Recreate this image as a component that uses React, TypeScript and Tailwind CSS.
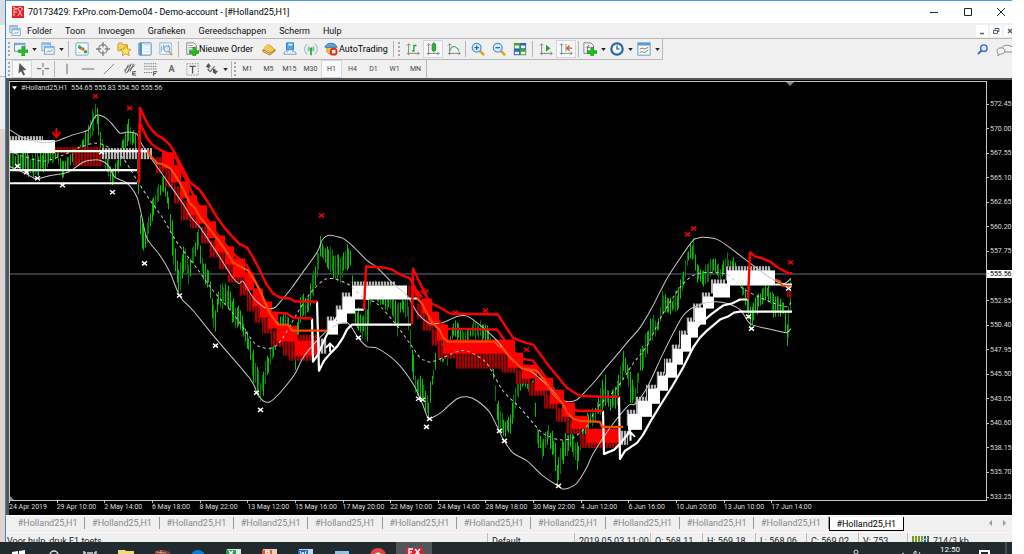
import React from "react";

type Block = [number, number, number, number];
type Point = [number, number];

const menuItems = ["Folder", "Toon", "Invoegen", "Grafieken", "Gereedschappen", "Scherm", "Hulp"];
const timeframes = ["M1", "M5", "M15", "M30", "H1", "H4", "D1", "W1", "MN"];

const prices = [
  "572.45", "570.00", "567.55", "565.10", "562.65", "560.20", "557.75", "555.56", "552.85",
  "550.40", "547.95", "545.50", "543.05", "540.60", "538.15", "535.70", "533.25",
];

const dates = [
  "24 Apr 2019", "29 Apr 10:00", "2 May 14:00", "6 May 18:00", "8 May 22:00", "13 May 12:00",
  "15 May 16:00", "17 May 20:00", "22 May 10:00", "24 May 14:00", "28 May 18:00", "30 May 22:00",
  "4 Jun 12:00", "6 Jun 16:00", "10 Jun 20:00", "13 Jun 10:00", "17 Jun 14:00",
];

/* ---------- chart data ---------- */

// x, high, low
const candles: [number, number, number][] = [
  [10, 150, 172], [20, 150, 168], [30, 153, 178], [45, 150, 170], [56, 142, 158], [62, 158, 178],
  [68, 155, 170], [75, 148, 158], [82, 140, 150], [89, 122, 145], [92, 108, 138], [96, 102, 114],
  [99, 122, 148], [103, 140, 162], [112, 168, 186], [118, 155, 172], [122, 140, 160], [128, 118, 142],
  [136, 135, 152], [140, 212, 235], [144, 232, 258], [150, 205, 230], [158, 185, 202], [163, 172, 192],
  [168, 192, 212], [173, 228, 268], [179, 268, 298], [184, 240, 270], [188, 258, 285], [193, 240, 262],
  [198, 230, 246], [201, 250, 270], [204, 263, 290], [209, 268, 285], [214, 310, 345], [218, 285, 308],
  [227, 284, 310], [235, 300, 327], [243, 318, 336], [249, 335, 355], [254, 350, 390], [260, 375, 405],
  [267, 355, 378], [273, 338, 357], [280, 312, 328], [288, 314, 330], [295, 345, 372], [300, 293, 323],
  [307, 295, 312], [312, 273, 300], [317, 252, 275], [320, 234, 257], [330, 247, 275], [336, 255, 278],
  [340, 248, 282], [350, 245, 268], [354, 305, 322], [360, 310, 337], [367, 297, 345], [370, 290, 304],
  [375, 280, 297], [383, 294, 307], [390, 297, 310], [397, 300, 335], [401, 297, 310], [407, 297, 317],
  [411, 335, 363], [415, 373, 397], [422, 373, 398], [428, 395, 420], [432, 370, 387], [437, 336, 357],
  [447, 343, 363], [453, 317, 340], [463, 330, 342], [473, 320, 337], [483, 320, 340], [490, 332, 350],
  [493, 367, 380], [497, 397, 423], [503, 417, 438], [510, 410, 433], [517, 373, 403], [523, 368, 388],
  [533, 376, 392], [537, 425, 443], [542, 438, 457], [548, 422, 440], [554, 435, 460], [557, 460, 485],
  [562, 440, 463], [570, 423, 450], [577, 443, 468], [582, 427, 443], [588, 410, 427], [594, 408, 425],
  [600, 383, 413], [605, 375, 407], [610, 395, 412], [617, 380, 407], [620, 363, 387], [624, 347, 367],
  [630, 373, 400], [635, 387, 405], [640, 350, 377], [647, 327, 353], [651, 307, 340], [657, 320, 333],
  [662, 290, 313], [670, 298, 313], [678, 288, 310], [683, 265, 287], [688, 247, 263], [693, 238, 257],
  [697, 265, 280], [703, 268, 290], [708, 262, 280], [713, 256, 273], [720, 266, 278], [727, 253, 270],
  [735, 260, 272], [743, 283, 297], [750, 303, 327], [755, 293, 317], [760, 290, 304], [767, 283, 297],
  [773, 293, 317], [783, 300, 314], [787, 313, 350], [791, 270, 307],
];

const upperBand =
  "9,129 22,137 40,142 56,141 72,135 88,130 92,122 97,115 106,118 113,125 120,133 127,132 137,134 140,141 147,152 163,175 182,202 192,218 200,227 210,242 220,257 232,276 239,283 243,281 253,297 263,306 268,308 275,307 283,298 292,287 302,273 317,252 322,240 326,236 330,235 336,236 343,238 352,245 367,260 377,267 393,283 407,295 417,312 424,319 430,323 443,322 450,319 457,316 464,315 470,317 483,327 497,340 513,360 523,368 533,372 553,390 561,398 567,401 577,399 587,389 597,378 605,368 618,353 627,342 640,327 652,307 667,278 682,255 693,240 697,238 703,237 717,239 728,246 740,255 757,268 773,279 779,282 785,283 791,278";
const lowerBand =
  "9,166 25,173 34,178 40,178 52,175 68,172 83,162 91,160 100,160 108,165 115,177 127,183 137,197 142,217 147,238 160,255 170,272 180,296 193,310 215,337 250,378 257,392 263,400 270,401 280,392 295,373 303,357 317,340 330,328 347,322 358,337 367,346 378,348 397,362 413,383 422,402 428,417 434,416 443,410 457,398 467,396 477,400 490,412 503,438 513,452 527,460 543,475 558,485 563,488 569,487 577,482 587,466 593,453 610,427 628,405 635,403 647,387 663,353 680,320 686,312 693,307 707,302 723,302 740,309 750,323 767,328 780,331 787,332 791,328";
const middleBand =
  "9,151 23,156 43,161 63,155 80,147 97,143 110,148 123,158 137,180 150,200 163,218 177,242 197,268 213,290 233,313 250,337 256,344 262,347 273,347 283,337 297,313 310,293 323,280 330,278 337,279 350,285 363,297 377,303 393,320 410,343 420,357 426,360 433,361 457,351 465,350 473,353 487,363 503,390 520,407 540,430 550,436 560,439 573,437 587,425 597,407 617,387 633,363 647,345 663,313 680,287 693,275 707,272 727,274 743,288 760,297 780,305 787,306 791,302";

const redLines = [
  "139,183 140,108 147,123 152,130 157,135 164,139 170,145 175,153 180,163 190,182 200,190 208,202 217,217 225,228 233,237 240,244 247,247 253,257 260,270 266,283 273,293 280,297 290,298 295,301 317,301",
  "139,140 140,123 147,138 152,144 157,148 165,152 176,158 190,188 200,208 220,238 237,257 247,265 260,290 268,309 272,312 287,313 293,317 312,318",
  "364,309 366,266 383,267 392,269 400,274 410,278 415,288 422,297",
  "412,324 413,268 422,287 430,302 440,307 450,313 498,314 505,325 513,337 522,341 533,344 540,353 547,363 557,375 567,387 573,391 580,395 600,396 619,396",
  "414,288 420,300 428,308 440,322 448,328 497,329 505,340 515,352 522,358 533,360 543,373 555,390 565,402 573,408 578,410 603,410",
  "748,299 750,252 755,256 762,258 770,261 778,267 787,272 792,273",
];

const orangeLines = [
  "148,150 150,156 153,158 157,163 163,164 170,168 175,175 180,183 185,193 190,203 195,208 200,217 210,229 220,242 227,252 233,262 240,266 248,270 254,279 260,290 265,302 270,313 278,324 288,324 292,330 327,330",
  "417,298 422,303 427,313 433,323 440,330 443,337 448,341 495,341 498,345 503,348 510,357 516,362 522,368 537,370 545,380 553,393 562,402 568,413 573,418 580,420 600,421 602,426 623,426",
  "775,279 780,281 782,285 792,286",
];

const whiteLines = [
  "9,170 137,170",
  "9,183 137,183",
  "55,151 148,151",
  "312,318 313,361 318,354 324,340 330,328 336,318 345,309 364,309",
  "317,301 319,370 324,360 331,352 337,346 343,337 347,329 352,324 411,324",
  "603,410 604,453 614,449 620,443 627,434 636,420 648,402 664,378 680,352 690,336 700,323 712,313 723,305 732,303 740,299 748,299",
  "619,396 620,458 625,450 631,446 637,442 643,434 652,418 660,405 672,386 683,367 693,347 700,337 707,330 720,319 728,316 734,312 740,311 792,311",
  "352,298 417,298",
  "727,284 792,284",
];

const redBlocks: Block[] = [
  [162, 152, 12, 16], [171, 165, 10, 17], [180, 181, 9, 17], [187, 195, 10, 20], [196, 205, 11, 18],
  [207, 221, 9, 17], [215, 235, 10, 17], [225, 246, 9, 18], [233, 258, 12, 19], [245, 272, 9, 18],
  [253, 288, 10, 18], [260, 301, 12, 16], [268, 313, 10, 15], [277, 325, 20, 16], [295, 340, 23, 15],
  [422, 298, 10, 15], [428, 311, 11, 14], [437, 324, 11, 16], [443, 339, 72, 14], [508, 352, 15, 15],
  [522, 364, 15, 14], [535, 377, 18, 13], [550, 389, 14, 14], [562, 402, 13, 14], [572, 415, 16, 13],
  [586, 428, 33, 14],
];

const darkRed: Block[] = [
  [55, 147, 47, 6], [73, 153, 29, 13], [283, 340, 27, 15], [297, 334, 23, 8], [407, 285, 10, 12],
  [456, 353, 59, 15], [585, 442, 35, 5], [787, 290, 5, 7],
];

const whiteBlocks: Block[] = [
  [9, 140, 46, 13], [352, 285, 55, 13], [343, 296, 12, 17], [337, 309, 10, 14], [328, 320, 10, 14],
  [628, 413, 14, 16], [638, 400, 14, 16], [648, 388, 12, 15], [658, 375, 10, 15], [666, 362, 11, 15],
  [673, 348, 10, 16], [681, 334, 10, 17], [688, 321, 10, 16], [695, 307, 11, 17], [703, 296, 11, 12],
  [713, 283, 17, 14], [727, 270, 48, 14],
];

const grayBlocks: Block[] = [
  [9, 136, 34, 4], [102, 148, 50, 11], [352, 281, 43, 4], [727, 266, 42, 4], [318, 338, 9, 15], [620, 430, 8, 14],
];

const whiteMarks: Point[] = [
  [17, 166], [26, 172], [37, 178], [62, 185], [101, 152], [112, 192], [144, 263], [179, 295], [215, 345],
  [256, 392], [260, 409], [358, 337], [418, 398], [422, 399], [429, 418], [426, 426], [499, 430],
  [504, 440], [558, 485], [748, 316], [751, 328], [788, 288],
];
const redMarks: Point[] = [
  [95, 96], [129, 108], [321, 215], [455, 312], [485, 310], [526, 349], [687, 234], [693, 228], [790, 262],
];

const noise = (n: number) => {
  const v = Math.sin(n * 127.1) * 43758.5453;
  return v - Math.floor(v);
};

const buildBars = () => {
  const bars: { x: number; y1: number; y2: number; bright: boolean }[] = [];
  let i = 0;
  let step = 0;
  for (let x = 10; x <= 791; x += step % 3 === 2 ? 1 : 2) {
    step++;
    while (i < candles.length - 2 && candles[i + 1][0] < x) i++;
    const [x1, h1, l1] = candles[i];
    const [x2, h2, l2] = candles[i + 1];
    const t = (x - x1) / (x2 - x1);
    const hi = h1 + (h2 - h1) * t;
    const lo = l1 + (l2 - l1) * t;
    const range = lo - hi;
    bars.push({
      x,
      y1: Math.round(hi + range * (0.4 * noise(x) - 0.08)),
      y2: Math.round(lo - range * (0.35 * noise(x + 900) - 0.05)),
      bright: noise(x + 300) > 0.4,
    });
  }
  return bars;
};

const bars = buildBars();

// Runs a smooth curve through the given points
const smooth = (points: string) => {
  const p = points.split(" ").map((s) => s.split(",").map(Number));
  let d = `M${p[0][0]} ${p[0][1]}`;
  for (let i = 0; i < p.length - 1; i++) {
    const a = p[Math.max(i - 1, 0)];
    const b = p[i];
    const c = p[i + 1];
    const e = p[Math.min(i + 2, p.length - 1)];
    d += `C${b[0] + (c[0] - a[0]) / 7} ${b[1] + (c[1] - a[1]) / 7} ${c[0] - (e[0] - b[0]) / 7} ${c[1] - (e[1] - b[1]) / 7} ${c[0]} ${c[1]}`;
  }
  return d;
};

const Cross: React.FC<{ at: Point; color: string }> = ({ at: [x, y], color }) => (
  <path d={`M${x - 2} ${y - 2}l5 4M${x + 3} ${y - 2}l-5 4`} stroke={color} strokeWidth="1.5" />
);

const Chart: React.FC = () => (
  <svg
    viewBox="10 82 976 417"
    preserveAspectRatio="none"
    className="absolute inset-0 h-full w-full"
    fill="none"
    role="img"
    aria-label="#Holland25,H1"
  >
    <defs>
      <pattern id="darkRed" width="3" height="4" patternUnits="userSpaceOnUse">
        <rect width="2" height="4" fill="#a80000" />
        <rect x="2" width="1" height="4" fill="#300" />
      </pattern>
      <pattern id="gray" width="3" height="4" patternUnits="userSpaceOnUse">
        <rect width="2" height="4" fill="#b4b4b4" />
        <rect x="2" width="1" height="4" fill="#222" />
      </pattern>
    </defs>

    {/* Current price */}
    <path d="M9 273.5H987" stroke="#667381" />

    {/* Price bars */}
    {bars.map((b) => (
      <path key={b.x} d={`M${b.x + 0.5} ${b.y1}V${b.y2 + 1}`} stroke={b.bright ? "#00c400" : "#008000"} />
    ))}

    {/* Cloud */}
    {redBlocks.map(([x, y, w, h]) => (
      <rect key={`s${x}`} x={x - 6} y={y + 5} width={w} height={h} fill="url(#darkRed)" />
    ))}
    {darkRed.map(([x, y, w, h]) => (
      <rect key={`d${x}`} x={x} y={y} width={w} height={h} fill="url(#darkRed)" />
    ))}
    {grayBlocks.map(([x, y, w, h]) => (
      <rect key={`g${x}`} x={x} y={y} width={w} height={h} fill="url(#gray)" />
    ))}
    {whiteBlocks.slice(2).map(([x, y, w, h]) => (
      <rect key={`t${x}`} x={x - 2} y={y - 4} width={w - 2} height={h} fill="url(#gray)" />
    ))}
    {redBlocks.map(([x, y, w, h]) => (
      <rect key={`r${x}`} x={x} y={y} width={w} height={h} fill="#ff0000" />
    ))}
    {whiteBlocks.map(([x, y, w, h]) => (
      <rect key={`w${x}`} x={x} y={y} width={w} height={h} fill="#fff" />
    ))}

    {/* Bands */}
    <path d={smooth(upperBand)} stroke="#c8c8c8" />
    <path d={smooth(lowerBand)} stroke="#c8c8c8" />
    <path d={smooth(middleBand)} stroke="#c8c8c8" strokeDasharray="3 3" />

    {/* Trend lines */}
    {whiteLines.map((points) => (
      <polyline key={points} points={points} stroke="#fff" strokeWidth="2.2" strokeLinejoin="round" />
    ))}
    {redLines.map((points) => (
      <polyline key={points} points={points} stroke="#ff0000" strokeWidth="2.4" strokeLinejoin="round" />
    ))}
    {orangeLines.map((points) => (
      <polyline key={points} points={points} stroke="#ff4b00" strokeWidth="2.2" strokeLinejoin="round" />
    ))}

    {whiteMarks.map((at) => (
      <Cross key={at.join()} at={at} color="#fff" />
    ))}
    {redMarks.map((at) => (
      <Cross key={at.join()} at={at} color="#f00000" />
    ))}
    <path d="M56.500 128v9M52.500 132l4 5 4-5" stroke="#f00000" strokeWidth="2" />
    <path d="M424.500 288v6M421 290l4 4 3-5" stroke="#f00000" strokeWidth="2" />
    <path d="M630.500 440v-9M626 436l4-5 5 5" stroke="#fff" strokeWidth="2" />
    <path d="M330 351v-8M326 347l4-4 4 4" stroke="#fff" strokeWidth="2" />
    <path d="M786 82h8l-4 4z" fill="#778899" />
    <path d="M10 495v4h4z" fill="#778899" />
  </svg>
);

/* ---------- toolbar icons, all on a 16 unit grid ---------- */

const Icon: React.FC<{ children: React.ReactNode }> = ({ children }) => (
  <svg viewBox="0 0 16 16" className="h-[14px] w-[14px] shrink-0" fill="none" aria-hidden="true">
    {children}
  </svg>
);

const Plus = () => <path d="M9 6h3v4h4v3h-4v4H9v-4H5v-3h4z" fill="#1fc41f" stroke="#0c8a12" strokeWidth=".7" />;

const icons = {
  newChart: (
    <>
      <rect x=".5" y="1.500" width="12" height="9" fill="#eaf3fb" stroke="#5b87b0" />
      <path d="M1 2.500h11" stroke="#7ba6cf" strokeWidth="2" />
      <g transform="translate(0 -1)"><Plus /></g>
    </>
  ),
  profiles: (
    <>
      <rect x="1" y="1" width="10" height="9" fill="#d5e6f5" stroke="#78a3cb" />
      <rect x="4" y="5" width="11" height="9" fill="#eff6fc" stroke="#6c9ac6" />
      <path d="M1 2h10M4 6h11" stroke="#8fb7dc" strokeWidth="2" />
      <path d="M6 12l2-2 2 1 3-2" stroke="#6a94b8" />
    </>
  ),
  market: (
    <>
      <rect x="1" y="1" width="14" height="14" rx="1" fill="#fafdff" stroke="#6d9fd0" />
      <path d="M5 3l3 3-2 3-3-3z" fill="#2eae2e" />
      <circle cx="9" cy="8" r="2" fill="#e85b27" />
      <circle cx="12" cy="11" r="2" fill="#33a833" />
      <path d="M3 12h3" stroke="#b4c7da" />
    </>
  ),
  target: (
    <>
      <circle cx="8" cy="8" r="5" stroke="#808080" strokeWidth="1.500" />
      <path d="M8 0v6M8 10v6M0 8h6M10 8h6" stroke="#808080" strokeWidth="1.500" />
    </>
  ),
  favorites: (
    <>
      <path d="M1 3l1-2h4l1 2h5v7H1z" fill="#f5d163" stroke="#c09a34" />
      <path d="M10 4l2 4 4 .5-3 3 1 4-4-2-4 2 1-4-3-3 4-.5z" fill="#ffe25b" stroke="#c29321" />
    </>
  ),
  navigator: (
    <>
      <rect x="1" y="1" width="14" height="14" rx="1" fill="#f5faff" stroke="#437cb3" />
      <path d="M3 1v14" stroke="#5592c9" strokeWidth="3" />
      <path d="M7 5h7M7 8h7M7 11h7" stroke="#d3dfea" />
      <path d="M6 2.500h8" stroke="#bcdcf5" strokeWidth="2" />
    </>
  ),
  tester: (
    <>
      <rect x="1" y="1" width="13" height="13" fill="#f3f8fc" stroke="#8fb1ce" />
      <path d="M3 11V5M5 8V3M11 6V3" stroke="#8499ac" />
      <circle cx="9" cy="8" r="3.500" fill="#d3e9f8" stroke="#6b8fae" />
      <path d="M11.500 11l3.500 4" stroke="#d5a437" strokeWidth="2" />
    </>
  ),
  order: (
    <>
      <path d="M2 1h8l3 3v10H2z" fill="#f7f7f7" stroke="#777" />
      <path d="M4 4h5M4 6.500h6M4 9h4" stroke="#888" />
      <Plus />
    </>
  ),
  book: (
    <>
      <path d="M1 10l7-7 7 6-6 5z" fill="#efbb48" stroke="#b58021" />
      <path d="M1 7l5-5 9 7-6 3z" fill="#f5c65a" />
      <path d="M1 9v2l8 4 6-5V9l-6 4z" fill="#fff0c4" stroke="#a46d11" />
    </>
  ),
  account: (
    <>
      <path d="M4 1h8v8H4z" fill="#4fa9e8" stroke="#2375b8" />
      <path d="M6 3h5" stroke="#d2efff" strokeWidth="2" />
      <path d="M1 14c0-4 3-4 4-3 1-3 6-3 6 0 3-1 4 1 4 3z" fill="#e8f2fa" stroke="#7198bb" />
    </>
  ),
  signal: (
    <>
      <path d="M4 2a7 7 0 000 12M12 2a7 7 0 010 12" stroke="#a9c6de" strokeWidth="1.500" />
      <path d="M6 5a4 4 0 000 6M10 5a4 4 0 010 6" stroke="#7dbf96" strokeWidth="1.500" />
      <circle cx="8" cy="8" r="2" fill="#2ea93a" />
      <path d="M8 8v7" stroke="#2ea93a" strokeWidth="2" />
    </>
  ),
  auto: (
    <>
      <circle cx="8" cy="9" r="5" fill="#f4c242" stroke="#b88d20" />
      <path d="M1 6c2-6 12-6 14 0z" fill="#5ca9df" stroke="#2b70a8" />
      <circle cx="11" cy="11" r="4.500" fill="#df2a1c" />
      <rect x="9" y="9" width="4" height="4" fill="#fff" />
    </>
  ),
  bars: (
    <>
      <path d="M3 2v13M1 13h14M1 4l2-2 2 2M13 11l2 2-2 2" stroke="#777" />
      <path d="M9 3v8M9 4h3M7 10h2" stroke="#219d31" strokeWidth="1.500" />
    </>
  ),
  candle: (
    <>
      <path d="M3 2v13M1 13h14M1 4l2-2 2 2M13 11l2 2-2 2" stroke="#777" />
      <path d="M9 0v12" stroke="#158a25" />
      <rect x="7" y="2" width="4" height="8" rx="1" fill="#28bd3b" stroke="#158a25" />
    </>
  ),
  line: (
    <>
      <path d="M3 2v13M1 13h14M1 4l2-2 2 2M13 11l2 2-2 2" stroke="#777" />
      <path d="M3 10c3-6 6-7 11 0" stroke="#3ca54a" strokeWidth="1.300" />
    </>
  ),
  zoomIn: (
    <>
      <path d="M10 10l5 5" stroke="#d7a92b" strokeWidth="3" />
      <circle cx="6.500" cy="6.500" r="5" fill="#d7edfb" stroke="#5594c5" strokeWidth="1.500" />
      <path d="M4 6.500h5M6.500 4v5" stroke="#246ca8" strokeWidth="1.500" />
    </>
  ),
  zoomOut: (
    <>
      <path d="M10 10l5 5" stroke="#d7a92b" strokeWidth="3" />
      <circle cx="6.500" cy="6.500" r="5" fill="#d7edfb" stroke="#5594c5" strokeWidth="1.500" />
      <path d="M4 6.500h5" stroke="#246ca8" strokeWidth="1.500" />
    </>
  ),
  tile: (
    <>
      <path d="M1 1h7v7H1zM8 8h7v7H8z" fill="#45a630" />
      <path d="M8 1h7v7H8zM1 8h7v7H1z" fill="#2e62c7" />
      <path d="M2 4h5v3H2zM9 4h5v3H9zM2 11h5v3H2zM9 11h5v3H9z" fill="#e9f3ff" />
    </>
  ),
  scroll: (
    <>
      <path d="M3 2v13M1 13h14M1 4l2-2 2 2M13 11l2 2-2 2" stroke="#777" />
      <path d="M8 3l5 4-5 4z" fill="#22a334" />
    </>
  ),
  shift: (
    <>
      <path d="M3 2v13M1 13h14M1 4l2-2 2 2M13 11l2 2-2 2M8 2v9" stroke="#6c8194" />
      <path d="M15 7h-5M12 4l-3 3 3 3" stroke="#d65322" strokeWidth="1.500" />
    </>
  ),
  indicator: (
    <>
      <path d="M1 1h8l3 3v9H1z" fill="#f6f6f6" stroke="#777" />
      <path d="M7 4c-2 0-2 1-2 7M4 6h4" stroke="#4c5b66" />
      <Plus />
    </>
  ),
  clock: (
    <>
      <circle cx="8" cy="8" r="6.500" fill="#eff8ff" stroke="#2667a8" strokeWidth="2.500" />
      <path d="M8 4v4h3" stroke="#31536f" strokeWidth="1.300" />
    </>
  ),
  template: (
    <>
      <rect x="1" y="1" width="14" height="14" fill="#f8fcff" stroke="#5a8fbb" />
      <path d="M1 2.500h14" stroke="#5b9cd4" strokeWidth="3" />
      <path d="M3 8l3-1 3 1 4-2" stroke="#bd4e35" />
      <path d="M3 12l3-1 3 1 4-3" stroke="#3c9648" />
    </>
  ),
  cursor: <path d="M5 1l8 8-4 .5 2.500 5-2 1L7 10.500 4 13z" fill="#555" />,
  cross: <path d="M8 1v5M8 9v6M1 7.500h5M10 7.500h5" stroke="#777" strokeWidth="1.300" />,
  vline: <path d="M8 2v12" stroke="#555" />,
  hline: <path d="M1 8h14" stroke="#555" />,
  trend: <path d="M2 14L14 2" stroke="#777" />,
  pitch: (
    <>
      <path d="M1 10l9-8M3 13L14 3M2 12l4-9M5 12l4-9M8 11l4-9" stroke="#555" />
      <path d="M15 11h-4v4h4M11 13h3" stroke="#444" />
    </>
  ),
  fibo: (
    <>
      <path d="M0 2h14M0 5h14M0 8h14M0 12h9" stroke="#666" strokeDasharray="1.500 1" />
      <path d="M15 11h-4v5M11 13h3" stroke="#444" />
    </>
  ),
  label: (
    <>
      <rect x="1" y="2" width="13" height="13" stroke="#777" strokeDasharray="1.500 1.500" />
      <path d="M4 5h7M7.500 5v8" stroke="#555" strokeWidth="1.500" />
    </>
  ),
  arrows: (
    <>
      <path d="M4 1l3 4H5v3L1 5zM12 14l3-4h-3V8H9v4z" fill="#555" />
      <path d="M3 8l3 3 5-6" stroke="#666" strokeWidth="1.500" />
    </>
  ),
};

type IconName = keyof typeof icons;

interface ToolProps {
  icon: IconName;
  label: string;
  pressed?: boolean;
  dropdown?: boolean;
}

const Tool: React.FC<ToolProps> = ({ icon, label, pressed, dropdown }) => (
  <button
    aria-label={label}
    className={`flex h-[18px] shrink-0 items-center ${dropdown ? "w-[27px] gap-1 pl-[2px]" : "justify-center"} ${
      pressed ? "w-5 border border-gray-300 bg-[#f8f8f8]" : "w-[21px]"
    }`}
  >
    <Icon>{icons[icon]}</Icon>
    {dropdown && (
      <svg viewBox="0 0 6 4" className="h-[3px] w-[5px] shrink-0" aria-hidden="true">
        <path d="M0 0h6L3 4z" fill="#222" />
      </svg>
    )}
  </button>
);

const Separator: React.FC<{ tight?: boolean }> = ({ tight }) => (
  <span className={`h-4 w-px shrink-0 bg-[#b4b4b4] ${tight ? "mx-px" : "mx-[2px]"}`} />
);

const Grip: React.FC<{ tight?: boolean }> = ({ tight }) => (
  <span
    className={`h-[14px] w-[2px] shrink-0 border-l-2 border-dotted border-[#a8a8a8] ${tight ? "mx-px" : "mx-[2px]"}`}
  />
);

const TitleBar = () => (
  <header className="flex h-[23px] shrink-0 items-center border-t border-[#4a9be0] bg-white pl-[6px]">
    <svg viewBox="0 0 12 12" className="h-3 w-3" fill="none" aria-hidden="true">
      <rect width="12" height="12" fill="#e4212b" />
      <path d="M2 10V3h3M2 6h3M6 3l4 7M10 3l-4 7M1 1l4 2 3-2 3 2" stroke="#ffc4c4" />
    </svg>
    <h1 className="ml-1 text-[9px] leading-3 text-black">
      70173429: FxPro.com-Demo04 - Demo-account - [#Holland25,H1]
    </h1>
    <div className="ml-auto flex pr-[3px]">
      <button aria-label="Minimize" className="flex h-5 w-[34px] items-center justify-center">
        <svg viewBox="0 0 8 8" className="h-2 w-2" stroke="#222"><path d="M0 4.500h8" /></svg>
      </button>
      <button aria-label="Maximize" className="flex h-5 w-[34px] items-center justify-center">
        <svg viewBox="0 0 8 8" className="h-2 w-2" stroke="#222" fill="none"><path d="M.5.5h7v7h-7z" /></svg>
      </button>
      <button aria-label="Close" className="flex h-5 w-6 items-center justify-center pl-2">
        <svg viewBox="0 0 8 8" className="h-2 w-2" stroke="#222"><path d="M0 0l8 8M8 0L0 8" /></svg>
      </button>
    </div>
  </header>
);

const MenuBar = () => (
  <nav className="flex h-[15px] shrink-0 items-center pl-[3px]">
    <svg viewBox="0 0 16 16" className="h-3 w-3" fill="none" aria-hidden="true">
      {icons.profiles}
    </svg>
    <div className="ml-[6px] flex gap-[13px]">
      {menuItems.map((item) => (
        <button key={item} className="text-[9px] leading-3 text-[#111]">{item}</button>
      ))}
    </div>
    <div className="ml-auto flex gap-[2px] overflow-hidden">
      <button aria-label="Minimize chart" className="h-3 w-3 bg-white">
        <svg viewBox="0 0 12 12" stroke="#4c6379"><path d="M4 8.500h4" strokeWidth="1.500" /></svg>
      </button>
      <button aria-label="Restore chart" className="h-3 w-3 bg-white">
        <svg viewBox="0 0 12 12" stroke="#4c6379" fill="none"><path d="M5 5V3.500h4v3H8M3.500 5.500h4v3h-4z" /></svg>
      </button>
      <button aria-label="Close chart" className="h-3 w-2 overflow-hidden bg-white">
        <svg viewBox="0 0 8 12" className="h-3 w-2" stroke="#4c6379" fill="none"><path d="M4 4l4 4M8 4L4 8" strokeWidth="1.500" /></svg>
      </button>
    </div>
  </nav>
);

const MainToolbar = () => (
  <div className="flex h-[22px] shrink-0 items-center border-t border-[#b8b8b8]">
    <div className="flex h-full items-center border-r border-b border-[#b8b8b8]">
      <Grip />
      <Tool icon="newChart" label="New chart" dropdown />
      <Tool icon="profiles" label="Profiles" dropdown />
      <Separator />
      <Tool icon="market" label="Market Watch" />
      <Tool icon="target" label="Data Window" />
      <Tool icon="favorites" label="Navigator" />
      <Tool icon="navigator" label="Terminal" />
      <Tool icon="tester" label="Strategy Tester" />
      <Separator />
      <button className="flex h-[18px] w-[77px] shrink-0 items-center pl-1 text-[9px] leading-3 whitespace-nowrap">
        <Icon>{icons.order}</Icon>
        Nieuwe Order
      </button>
      <Tool icon="book" label="MetaEditor" />
      <Tool icon="account" label="Community" />
      <Tool icon="signal" label="Signals" />
      <button className="flex h-[18px] w-[70px] shrink-0 items-center gap-px pl-[3px] text-[9px] leading-3 whitespace-nowrap">
        <Icon>{icons.auto}</Icon>
        AutoTrading
      </button>
      <Separator />
      <Grip />
      <Tool icon="bars" label="Bar Chart" />
      <Tool icon="candle" label="Candlesticks" pressed />
      <Tool icon="line" label="Line Chart" />
      <Separator tight />
      <Tool icon="zoomIn" label="Zoom In" />
      <Tool icon="zoomOut" label="Zoom Out" />
      <Tool icon="tile" label="Tile Windows" />
      <Separator />
      <Tool icon="scroll" label="Auto Scroll" />
      <Tool icon="shift" label="Chart Shift" pressed />
      <Separator />
      <Tool icon="indicator" label="Indicators" dropdown />
      <Tool icon="clock" label="Periods" dropdown />
      <Tool icon="template" label="Templates" dropdown />
    </div>
    <div className="ml-auto flex items-center gap-2 overflow-hidden">
      <button aria-label="Search">
        <svg viewBox="0 0 12 12" className="h-[11px] w-[11px]" fill="none" stroke="#3568cf">
          <circle cx="7.500" cy="4.500" r="3.500" fill="#dfeafa" strokeWidth="1.500" />
          <path d="M5 7l-4 4" strokeWidth="2" />
        </svg>
      </button>
      <button aria-label="Chat">
        <svg viewBox="0 0 16 12" className="h-3 w-4" fill="#f3f3f3" stroke="#8b8b8b">
          <path d="M6 4c1-4 10-3 11 0v4H8z" />
          <path d="M1 6c1-3 8-3 8 1 0 3-4 3-5 3l-2 2V9C1 8 1 7 1 6z" />
        </svg>
      </button>
    </div>
  </div>
);

const LineToolbar = () => (
  <div className="flex h-[18px] shrink-0 items-center">
    <div className="flex h-full items-center border-r border-[#b8b8b8]">
      <Grip />
      <Tool icon="cursor" label="Cursor" pressed />
      <Tool icon="cross" label="Crosshair" />
      <Separator tight />
      <Tool icon="vline" label="Vertical Line" />
      <Tool icon="hline" label="Horizontal Line" />
      <Tool icon="trend" label="Trendline" />
      <Tool icon="pitch" label="Equidistant Channel" />
      <Tool icon="fibo" label="Fibonacci Retracement" />
      <button className="w-[21px] text-[9px] leading-3 font-bold text-[#666]">A</button>
      <Tool icon="label" label="Text Label" />
      <Tool icon="arrows" label="Arrows" dropdown />
      <Separator tight />
      <Grip tight />
      {timeframes.map((tf) => (
        <button
          key={tf}
          className={`h-[18px] w-[21px] text-[7px] leading-3 text-[#444] ${
            tf === "H1" ? "border border-gray-300 bg-[#f8f8f8]" : ""
          }`}
        >
          {tf}
        </button>
      ))}
    </div>
  </div>
);

const ChartWindow = () => (
  <section className="grid min-h-0 flex-1 grid-cols-[minmax(0,1fr)_25px] grid-rows-[minmax(0,1fr)_14px] border-t-2 border-l-3 border-[#555] bg-black pt-px text-[7px] leading-2 text-[#ddd]">
    <div className="relative border border-[#c8c8c8]">
      <Chart />
      <p className="relative flex items-center gap-1 pt-[2px] pl-[2px] whitespace-pre">
        <svg viewBox="0 0 6 4" className="h-1 w-[5px]" aria-hidden="true"><path d="M0 0h6L3 4z" fill="#fff" /></svg>
        {"#Holland25,H1  554.65 555.83 554.50 555.56"}
      </p>
    </div>
    <ol className="flex flex-col justify-between pt-[19px]">
      {prices.map((price) => (
        <li
          key={price}
          className={`flex h-2 items-center gap-px ${price === "555.56" ? "-translate-y-[2px] bg-white text-black" : ""}`}
        >
          <span className="h-px w-[2px] bg-[#c8c8c8]" />
          {price}
        </li>
      ))}
    </ol>
    <ol className="mr-[168px] grid grid-cols-[repeat(17,minmax(0,1fr))]">
      {dates.map((date) => (
        <li key={date} className="whitespace-nowrap">
          <span className="block h-[2px] w-px bg-[#c8c8c8]" />
          {date}
        </li>
      ))}
    </ol>
  </section>
);

const ChartTabs = () => (
  <div className="flex h-[17px] shrink-0 items-start border-t border-white pt-px pl-[5px]">
    <div className="flex flex-1 pr-[84px]">
      {Array.from({ length: 12 }, (_, i) => (
        <button
          key={i}
          className={`min-w-0 flex-1 text-[9px] leading-3 ${
            i === 11
              ? "h-[14px] border border-t-0 border-black bg-white text-black"
              : "h-3 border-r border-[#999] text-[#888]"
          }`}
        >
          #Holland25,H1
        </button>
      ))}
    </div>
    <svg viewBox="0 0 20 8" className="mt-[2px] mr-1 h-2 w-5" fill="#999" aria-hidden="true">
      <path d="M4 1v6L1 4zM15 1v6l3-3z" />
    </svg>
  </div>
);

const statusFields = [
  { text: "Default", width: "w-[87px]" },
  { text: "2019.05.03 11:00", width: "w-[76px]" },
  { text: "O: 568.11", width: "w-[52px]" },
  { text: "H: 569.18", width: "w-[53px]" },
  { text: "L: 568.06", width: "w-[51px]" },
  { text: "C: 569.02", width: "w-[52px]" },
  { text: "V: 753", width: "w-[49px]" },
];

const StatusBar = () => (
  <footer className="flex h-[10px] shrink-0 overflow-hidden border-t border-[#f8f8f8] text-[9px] leading-[16px] whitespace-nowrap text-[#222]">
    <span className="flex-1 pl-px">Voor hulp, druk F1 toets</span>
    {statusFields.map(({ text, width }) => (
      <span key={text} className={`${width} shrink-0 border-l border-[#bbb] pl-1`}>{text}</span>
    ))}
    <span className="flex w-[105px] shrink-0 gap-1 border-l border-[#bbb] pl-1">
      <svg viewBox="0 0 17 10" className="mt-[3px] h-[10px] w-[17px]" aria-hidden="true">
        <path d="M1 0v10M4 0v10M7 0v10M10 0v10" stroke="#7a9a1c" strokeWidth="2" />
        <path d="M13 0v10M16 0v10" stroke="#2c6680" strokeWidth="2" />
        <path d="M5 7L16 2" stroke="#a7c7d0" />
      </svg>
      714/3 kb
    </span>
  </footer>
);

const apps = [
  { name: "Start", art: <path d="M2 10l6-1v4H2zM9 9l6-1v5H9z" fill="#fff" /> },
  { name: "Search", art: <circle cx="8" cy="13" r="4" stroke="#ddd" strokeWidth="1.500" /> },
  { name: "Task View", art: <path d="M2 9v2h2M14 9v2h-2M5 11h6" stroke="#ddd" strokeWidth="1.500" /> },
  { name: "Explorer", art: <path d="M0 8h7l1 1h8v5H0z" fill="#f5d774" /> },
  { name: "WinRAR", art: <><path d="M1 9l9-1 6 2v4H1z" fill="#7e3e50" /><path d="M2 10l10 1M7 8v5" stroke="#d5a14b" /></> },
  { name: "Edge", art: <path d="M1 14c1-8 13-8 14 0h-4c-1-3-5-3-6 0z" fill="#087edb" /> },
  { name: "Excel", art: <><path d="M1 7h14v7H1z" fill="#d7ecd9" /><path d="M0 8h10v6H0z" fill="#2d9b4c" /><path d="M3 9l4 4M7 9l-4 4" stroke="#fff" strokeWidth="1.500" /></> },
  { name: "PowerPoint", art: <><path d="M1 7h14v7H1z" fill="#f2c9b2" /><path d="M0 8h10v6H0z" fill="#e1592d" /><path d="M4 14V9h3v3H4" stroke="#fff" strokeWidth="1.500" /></> },
  { name: "Word", art: <><path d="M1 7h14v7H1z" fill="#c3d8f2" /><path d="M0 8h10v6H0z" fill="#1c67c4" /><path d="M2 9l2 5 1-4 2 4 1-5" stroke="#fff" /></> },
  { name: "Photos", art: <><path d="M1 9h14v5H1z" fill="#8fc7ea" /><path d="M3 14c1-4 6-4 7 0" fill="#e9a24d" /></> },
  { name: "Chrome", art: <><circle cx="8" cy="14" r="8" fill="#df473c" /><circle cx="8" cy="14" r="3.500" fill="#fff" /></> },
  { name: "FxPro", art: <><path d="M0 6h17v8H0z" fill="#e41e2a" /><path d="M3 13V7h4M3 10h3M9 7l5 6M14 7l-5 6" stroke="#fff" strokeWidth="1.500" /></> },
];

const Taskbar = () => (
  <footer className="flex h-3 shrink-0 overflow-hidden bg-[#202a2f]">
    {apps.map(({ name, art }) => (
      <button
        key={name}
        aria-label={name}
        className={`flex w-9 shrink-0 justify-center ${name === "FxPro" ? "bg-[#50565a]" : ""}`}
      >
        <svg viewBox="0 0 17 12" className="h-3 w-[17px]" fill="none" aria-hidden="true">
          {art}
        </svg>
      </button>
    ))}
    <div className="ml-auto flex gap-[17px] pr-[3px]">
      <svg viewBox="0 0 70 12" className="h-3 w-[70px]" fill="none" stroke="#ddd" aria-hidden="true">
        <circle cx="3" cy="10" r="2" />
        <path d="M49 12l2-1M61 12v-2l2-1v3M66 10l1 2" />
      </svg>
      <time className="pt-1 text-[8px] leading-2 text-white">12:50</time>
      <svg viewBox="0 0 32 12" className="h-3 w-8" fill="none" aria-hidden="true">
        <path d="M3 13V9h9v4" stroke="#fff" strokeWidth="2" />
        <path d="M29 0v12" stroke="#667077" />
      </svg>
    </div>
  </footer>
);

const App: React.FC = () => (
  <div className="flex h-screen overflow-hidden bg-white font-[Roboto,sans-serif]">
    <div className="flex min-w-0 flex-1 flex-col">
      <div className="flex min-h-0 flex-1">
        {/* Window behind this one */}
        <div className="flex w-[5px] shrink-0 flex-col bg-[#e2d3cc]">
          <div className="h-[25px] bg-[#dadde2]" />
          <div className="h-[52px] border-b border-[#b8b8b8] bg-[#f3f3f3]" />
          <div className="h-[52px] bg-[#eeeeee]" />
        </div>
        <main className="flex min-w-0 flex-1 flex-col border-l border-[#3f86c0] bg-[#f0f0f0]">
          <TitleBar />
          <MenuBar />
          <MainToolbar />
          <LineToolbar />
          <ChartWindow />
          <ChartTabs />
          <StatusBar />
        </main>
      </div>
      <Taskbar />
    </div>
    <div className="w-3 shrink-0" />
  </div>
);

export default App;
